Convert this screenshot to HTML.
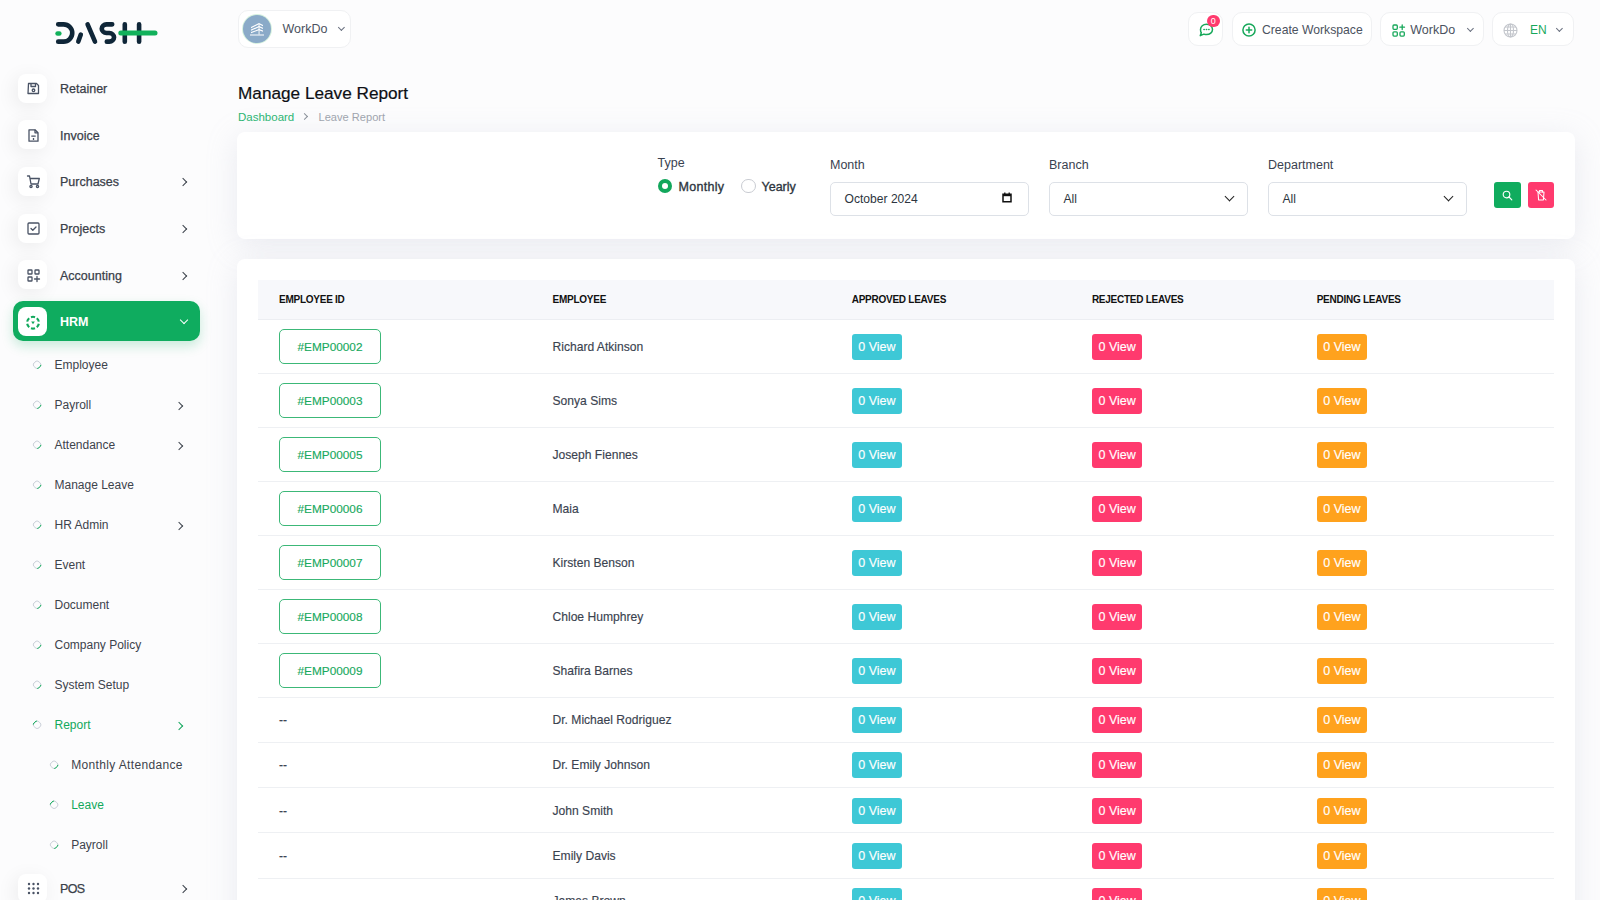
<!DOCTYPE html>
<html><head><meta charset="utf-8">
<style>
*{box-sizing:border-box;margin:0;padding:0}
html,body{width:1600px;height:900px;overflow:hidden}
body{font-family:"Liberation Sans",sans-serif;background:#fcfcfd;position:relative;color:#293240}
.abs{position:absolute}
#topbg{left:0;top:0;width:1600px;height:120px;background:linear-gradient(#fdfdfd,#fbfbfc)}
#sidebar{left:0;top:0;width:237px;height:900px}
.ib{position:absolute;left:18px;width:29px;height:29px;border-radius:8px;background:#fff;box-shadow:-3px 4px 20px rgba(0,0,0,.07)}
.ib svg{position:absolute;left:7.8px;top:7.5px}
.mi{position:absolute;left:60px;font-size:12.5px;color:#3a4049;line-height:16px;-webkit-text-stroke:.25px #3a4049}
.chev{position:absolute;left:180.3px;width:6px;height:6px;border-right:1.7px solid #3a4049;border-top:1.7px solid #3a4049;transform:rotate(45deg)}
.si{position:absolute;left:54px;font-size:12px;color:#3d434c;line-height:16px}
.bul{position:absolute;width:7.5px;height:7.5px;border-radius:50%;border:1.7px solid #cdd2da;border-bottom-color:#11a65a;transform:rotate(-45deg)}
.bul.act{border-color:#cdd2da;border-top-color:#11a65a}
.schev{position:absolute;left:176px;width:6px;height:6px;border-right:1.5px solid #2d3540;border-top:1.5px solid #2d3540;transform:rotate(45deg)}
.card{position:absolute;left:237px;width:1338px;background:#fff;border-radius:8px;box-shadow:0 6px 30px rgba(182,186,203,.26)}
.hbtn{position:absolute;top:12px;height:34px;background:#fff;border-radius:10px;border:1px solid #f0f1f3}
.lbl{position:absolute;font-size:12.5px;color:#3a4250;line-height:15px}
.inp{position:absolute;top:181.8px;height:33.8px;border:1px solid #dde1e7;border-radius:5px;background:#fff}
.inp span{position:absolute;left:13.5px;top:9px;font-size:12.1px;color:#2d3540;line-height:15px}
.dchev{position:absolute;width:7px;height:7px;border-right:1.6px solid #222;border-bottom:1.6px solid #222;transform:rotate(45deg)}
table{border-collapse:collapse;position:absolute;left:258px;top:280px;width:1296px;table-layout:fixed}
th{height:39px;background:#f7f8fb;text-align:left;font-size:10px;letter-spacing:-.25px;font-weight:bold;color:#111;padding:0;border-bottom:1px solid #eceef2}
td{padding:1px 0 0 0;font-size:12.1px;color:#3b4350;-webkit-text-stroke:.15px #3b4350;border-bottom:1px solid #eef0f3}
tr.r1 td{height:54px}
tr.r2 td{height:45.25px}
.emp{display:inline-block;width:102px;height:35px;border:1.5px solid #3cb878;border-radius:5px;color:#19a95e;font-size:11.8px;-webkit-text-stroke:.15px #19a95e;text-align:center;line-height:34px}
.vb{display:inline-block;width:50.5px;height:26px;border-radius:3px;color:#fff;-webkit-text-stroke:.15px #fff;font-size:12.5px;text-align:center;line-height:26px}
.c{background:#3ec8d6}.p{background:#ff3a6e}.o{background:#ffa21d}
</style></head><body>
<div id="sidebar" class="abs">
  <!-- logo -->
  <svg class="abs" style="left:50px;top:15px" width="115" height="35" viewBox="0 0 115 35">
    <g fill="none" stroke="#0f2638" stroke-width="4.6" stroke-linecap="round">
      <path d="M8.2 9.35H13.6A8.65 8.65 0 0 1 13.6 26.65H8.2"/>
      <path d="M30.8 19.6L28.3 26.6"/>
      <path d="M37.6 9.3L45 26.6"/>
      <path d="M62.2 9.35H56.5A5 4.33 0 0 0 56.5 18H59.3A5 4.33 0 0 1 59.3 26.65H56.8"/>
      <path d="M74.8 9.35V26.65M89.1 9.35V26.65"/>
    </g>
    <g fill="none" stroke="#12b15b" stroke-linecap="round">
      <path d="M7.6 18.5H9.3" stroke-width="4.6"/>
      <path d="M70.8 18H105" stroke-width="5"/>
    </g>
  </svg>

  <!-- main items -->
  <div class="ib" style="top:73.5px"><svg width="15" height="15" viewBox="0 0 15 15" fill="none" stroke="#4a5365" stroke-width="1.3" stroke-linejoin="round"><path d="M2.5 2.5h8l2 2v8h-10.5z"/><path d="M5 2.5v3h4.5v-3"/><circle cx="7.5" cy="9.3" r="1.3"/></svg></div>
  <div class="mi" style="top:81.0px">Retainer</div>
  <div class="ib" style="top:120px"><svg width="15" height="15" viewBox="0 0 15 15" fill="none" stroke="#4a5365" stroke-width="1.3" stroke-linejoin="round"><path d="M3 1.8h6l3 3v8.4h-9z"/><path d="M9 1.8v3h3"/><path d="M5.3 8.2h4.4M7.5 10v2"/></svg></div>
  <div class="mi" style="top:127.5px">Invoice</div>
  <div class="ib" style="top:166.5px"><svg width="15" height="15" viewBox="0 0 15 15" fill="none" stroke="#4a5365" stroke-width="1.3" stroke-linejoin="round" stroke-linecap="round"><path d="M1.5 2h2l1.5 8h7l1.3-5.5H4"/><circle cx="5" cy="12.5" r="1.1"/><circle cx="11.5" cy="12.5" r="1.1"/></svg></div>
  <div class="mi" style="top:174.0px">Purchases</div>
  <div class="chev" style="top:179.2px"></div>
  <div class="ib" style="top:213.5px"><svg width="15" height="15" viewBox="0 0 15 15" fill="none" stroke="#4a5365" stroke-width="1.3" stroke-linejoin="round" stroke-linecap="round"><rect x="2" y="2" width="11" height="11" rx="1"/><path d="M5 7.5l1.8 1.8 3.2-3.3"/></svg></div>
  <div class="mi" style="top:221.0px">Projects</div>
  <div class="chev" style="top:226.2px"></div>
  <div class="ib" style="top:260px"><svg width="15" height="15" viewBox="0 0 15 15" fill="none" stroke="#4a5365" stroke-width="1.3" stroke-linejoin="round" stroke-linecap="round"><rect x="2" y="2" width="4" height="4" rx=".6"/><rect x="9" y="2" width="4" height="4" rx=".6"/><rect x="2" y="9" width="4" height="4" rx=".6"/><path d="M11 8.5v5M8.5 11h5"/></svg></div>
  <div class="mi" style="top:267.5px">Accounting</div>
  <div class="chev" style="top:272.7px"></div>
  <!-- HRM -->
  <div class="abs" style="left:12.5px;top:301px;width:187.5px;height:40px;border-radius:10px;background:#0fac5f;box-shadow:0 5px 12px rgba(15,172,95,.22)"></div>
  <div class="ib" style="top:306.5px;box-shadow:none"><svg width="17" height="17" viewBox="0 0 17 17" style="left:6px;top:6px"><path d="M14.81 10.72A5.9 5.9 0 0 1 12.79 14.22M11.02 15.24A5.9 5.9 0 0 1 6.98 15.24M5.21 14.22A5.9 5.9 0 0 1 3.19 10.72M3.19 8.68A5.9 5.9 0 0 1 5.21 5.18M6.98 4.16A5.9 5.9 0 0 1 11.02 4.16M12.79 5.18A5.9 5.9 0 0 1 14.81 8.68" fill="none" stroke="#10a85c" stroke-width="2.1"/><path d="M7.2 8.4h3.6l-1.8 2.9z" fill="#10a85c"/></svg></div>
  <div class="mi" style="top:314px;color:#fff;font-weight:bold;-webkit-text-stroke:0">HRM</div>
  <div class="abs" style="left:180.5px;top:316.5px;width:6px;height:6px;border-right:1.6px solid #fff;border-bottom:1.6px solid #fff;transform:rotate(45deg)"></div>
  <div class="bul" style="left:32.8px;top:360.5px"></div>
  <div class="si" style="left:54.5px;top:357.3px;color:#3d434c">Employee</div>
  <div class="bul" style="left:32.8px;top:400.5px"></div>
  <div class="si" style="left:54.5px;top:397.3px;color:#3d434c">Payroll</div>
  <div class="schev" style="top:402.5px;border-color:#3d434c"></div>
  <div class="bul" style="left:32.8px;top:440.5px"></div>
  <div class="si" style="left:54.5px;top:437.3px;color:#3d434c">Attendance</div>
  <div class="schev" style="top:442.5px;border-color:#3d434c"></div>
  <div class="bul" style="left:32.8px;top:480.5px"></div>
  <div class="si" style="left:54.5px;top:477.3px;color:#3d434c">Manage Leave</div>
  <div class="bul" style="left:32.8px;top:520.5px"></div>
  <div class="si" style="left:54.5px;top:517.3px;color:#3d434c">HR Admin</div>
  <div class="schev" style="top:522.5px;border-color:#3d434c"></div>
  <div class="bul" style="left:32.8px;top:560.5px"></div>
  <div class="si" style="left:54.5px;top:557.3px;color:#3d434c">Event</div>
  <div class="bul" style="left:32.8px;top:600.5px"></div>
  <div class="si" style="left:54.5px;top:597.3px;color:#3d434c">Document</div>
  <div class="bul" style="left:32.8px;top:640.5px"></div>
  <div class="si" style="left:54.5px;top:637.3px;color:#3d434c">Company Policy</div>
  <div class="bul" style="left:32.8px;top:680.5px"></div>
  <div class="si" style="left:54.5px;top:677.3px;color:#3d434c">System Setup</div>
  <div class="bul act" style="left:32.8px;top:720.5px"></div>
  <div class="si" style="left:54.5px;top:717.3px;color:#13a85c">Report</div>
  <div class="schev" style="top:722.5px;border-color:#13a85c"></div>
  <div class="bul" style="left:49.5px;top:760.5px"></div>
  <div class="si" style="left:71.2px;top:757.3px;color:#3d434c;letter-spacing:.35px">Monthly Attendance</div>
  <div class="bul act" style="left:49.5px;top:800.5px"></div>
  <div class="si" style="left:71.2px;top:797.3px;color:#13a85c">Leave</div>
  <div class="bul" style="left:49.5px;top:840.5px"></div>
  <div class="si" style="left:71.2px;top:837.3px;color:#3d434c">Payroll</div>
  <div class="ib" style="top:873.5px"><svg width="15" height="15" viewBox="0 0 15 15" fill="#4a5365"><circle cx="3" cy="3" r="1.2"/><circle cx="7.5" cy="3" r="1.2"/><circle cx="12" cy="3" r="1.2"/><circle cx="3" cy="7.5" r="1.2"/><circle cx="7.5" cy="7.5" r="1.2"/><circle cx="12" cy="7.5" r="1.2"/><circle cx="3" cy="12" r="1.2"/><circle cx="7.5" cy="12" r="1.2"/><circle cx="12" cy="12" r="1.2"/></svg></div>
  <div class="mi" style="top:881px;letter-spacing:-.6px">POS</div>
  <div class="chev" style="top:886.2px"></div>
</div>

<!-- header -->
<div class="hbtn" style="left:238px;top:10px;width:113px;height:38px">
  <div class="abs" style="left:4px;top:4px;width:28px;height:28px;border-radius:50%;background:#8aaac8;box-shadow:0 0 0 1px #d7f2df">
    <svg class="abs" style="left:6px;top:6px" width="16" height="16" viewBox="0 0 16 16" fill="#fff"><path d="M2 6l8-4 4 2v1.2l-4-2-8 4z"/><path d="M2 8.5l8-3.5 4 1.8v1.2l-4-1.8-8 3.5z"/><path d="M2 11l8-3 4 1.5v1.2l-4-1.5-8 3z"/><path d="M1 13.5h14v1h-14z"/><path d="M9.6 3v10.5h.9V3z"/></svg>
  </div>
  <div class="abs" style="left:43.5px;top:11px;font-size:12.5px;color:#4b5260;line-height:15px">WorkDo</div>
  <div class="abs" style="left:99.5px;top:13.5px;width:4.8px;height:4.8px;border-right:1.3px solid #6b7280;border-bottom:1.3px solid #6b7280;transform:rotate(45deg)"></div>
</div>
<div class="hbtn" style="left:1188px;width:35px">
  <svg class="abs" style="left:9.5px;top:9.7px" width="15" height="14" viewBox="0 0 15 14" fill="none" stroke="#17a85a" stroke-width="1.5" stroke-linejoin="round"><path d="M7.5 1.2c3.4 0 6 2.3 6 5.2s-2.6 5.2-6 5.2c-.9 0-1.8-.2-2.6-.5L1.3 12.6l1-2.9C1.6 8.8 1.5 7.6 1.5 6.4c0-2.9 2.6-5.2 6-5.2z"/><path d="M5 6.5h.2M7.4 6.5h.2M9.8 6.5h.2" stroke-width="1.6" stroke-linecap="round"/></svg>
  <div class="abs" style="left:18px;top:1.5px;width:12.5px;height:12.5px;border-radius:50%;background:#ff3a6e;color:#fff;font-size:9px;text-align:center;line-height:12.5px">0</div>
</div>
<div class="hbtn" style="left:1232px;width:140px">
  <svg class="abs" style="left:8.7px;top:10px" width="14" height="14" viewBox="0 0 14 14" fill="none" stroke="#17a85a" stroke-width="1.5" stroke-linecap="round"><circle cx="7" cy="7" r="6.1"/><path d="M7 4.3v5.4M4.3 7h5.4"/></svg>
  <div class="abs" style="left:29px;top:10px;font-size:12.2px;color:#4b5260;line-height:15px">Create Workspace</div>
</div>
<div class="hbtn" style="left:1380px;width:104px">
  <svg class="abs" style="left:10.5px;top:11px" width="14" height="13" viewBox="0 0 14 13" fill="none" stroke="#17a85a" stroke-width="1.3" stroke-linecap="round"><rect x="1" y="1" width="4.3" height="4.3" rx="1"/><rect x="1" y="7.8" width="4.3" height="4.3" rx="1"/><rect x="8" y="7.8" width="4.3" height="4.3" rx="1"/><path d="M10.2 0.9v4.6M7.9 3.2h4.6"/></svg>
  <div class="abs" style="left:29.3px;top:10px;font-size:12.5px;color:#4b5260;line-height:15px">WorkDo</div>
  <div class="abs" style="left:86.5px;top:12.5px;width:4.8px;height:4.8px;border-right:1.3px solid #6b7280;border-bottom:1.3px solid #6b7280;transform:rotate(45deg)"></div>
</div>
<div class="hbtn" style="left:1492px;width:82px">
  <svg class="abs" style="left:10px;top:10px" width="15" height="15" viewBox="0 0 15 15" fill="none" stroke="#c3c6cc" stroke-width="1.1"><circle cx="7.5" cy="7.5" r="6.5"/><ellipse cx="7.5" cy="7.5" rx="3" ry="6.5"/><path d="M1 7.5h13M2 4h11M2 11h11M7.5 1v13"/></svg>
  <div class="abs" style="left:37px;top:10.3px;font-size:12px;color:#17a85a;line-height:15px">EN</div>
  <div class="abs" style="left:64px;top:12.5px;width:4.8px;height:4.8px;border-right:1.3px solid #6b7280;border-bottom:1.3px solid #6b7280;transform:rotate(45deg)"></div>
</div>
<!-- title -->
<div class="abs" style="left:238px;top:82.5px;font-size:17.2px;color:#0d0f14;-webkit-text-stroke:.2px #0d0f14;line-height:20px">Manage Leave Report</div>
<div class="abs" style="left:238px;top:110px;font-size:11.5px;color:#2bb673;line-height:14px">Dashboard</div>
<div class="abs" style="left:302px;top:114px;width:5px;height:5px;border-right:1.2px solid #8a9099;border-top:1.2px solid #8a9099;transform:rotate(45deg)"></div>
<div class="abs" style="left:318.5px;top:110.3px;font-size:11.1px;color:#a0a5ae;line-height:14px">Leave Report</div>
<!-- filter card -->
<div class="card" style="top:132px;height:107px"></div>
<div class="lbl" style="left:657.5px;top:155.5px">Type</div>
<div class="abs" style="left:657.5px;top:178.5px;width:14.5px;height:14.5px;border-radius:50%;background:#12a75c"><div class="abs" style="left:4.25px;top:4.25px;width:6px;height:6px;border-radius:50%;background:#fff"></div></div>
<div class="abs" style="left:678.5px;top:179.5px;font-size:12.5px;color:#2d3540;line-height:15px;letter-spacing:.3px;-webkit-text-stroke:.35px #2d3540">Monthly</div>
<div class="abs" style="left:741px;top:178.5px;width:14.5px;height:14.5px;border-radius:50%;border:1px solid #c9ccd2;background:#fff"></div>
<div class="abs" style="left:761.5px;top:179.5px;font-size:12.5px;color:#2d3540;line-height:15px;-webkit-text-stroke:.35px #2d3540">Yearly</div>
<div class="lbl" style="left:830px;top:158px">Month</div>
<div class="inp" style="left:830px;width:199px"><span>October 2024</span>
  <svg class="abs" style="left:171px;top:9.3px" width="10" height="11" viewBox="0 0 10 11"><path d="M1 2.2h8v7.6h-8z" fill="none" stroke="#111" stroke-width="1.5"/><path d="M1 2h8v2.2h-8z" fill="#111"/><path d="M2.8 0.5v2M7.2 0.5v2" stroke="#111" stroke-width="1.3"/></svg>
</div>
<div class="lbl" style="left:1049px;top:158px">Branch</div>
<div class="inp" style="left:1049px;width:199px"><span>All</span><div class="dchev" style="left:176px;top:10px"></div></div>
<div class="lbl" style="left:1268px;top:158px">Department</div>
<div class="inp" style="left:1268px;width:199px"><span>All</span><div class="dchev" style="left:176px;top:10px"></div></div>
<div class="abs" style="left:1494px;top:182px;width:26.5px;height:26px;border-radius:3px;background:#10ac5e">
  <svg class="abs" style="left:8px;top:7.5px" width="11" height="11" viewBox="0 0 11 11" fill="none" stroke="#fff" stroke-width="1.15" stroke-linecap="round"><circle cx="4.5" cy="4.5" r="3.3"/><path d="M7 7l2.8 2.8"/></svg>
</div>
<div class="abs" style="left:1527.5px;top:182px;width:26.5px;height:26px;border-radius:3px;background:#ff3a6e">
  <svg class="abs" style="left:7.5px;top:7px" width="12" height="12" viewBox="0 0 12 12" fill="none" stroke="#fff" stroke-width="1.05" stroke-linecap="round" stroke-linejoin="round"><path d="M3 3h6l-.6 8h-4.8z"/><path d="M4.5 3v-1.6h3V3"/><path d="M1 1l10 10"/></svg>
</div>
<!-- table card -->
<div class="card" style="top:259px;height:700px"></div>
<table>
<colgroup><col style="width:294.5px"><col style="width:299.2px"><col style="width:240.2px"><col style="width:224.8px"><col></colgroup>
<tr><th style="padding-left:21px">EMPLOYEE ID</th><th>EMPLOYEE</th><th>APPROVED LEAVES</th><th>REJECTED LEAVES</th><th>PENDING LEAVES</th></tr>
<tr class="r1"><td style="padding-left:21px"><span class="emp">#EMP00002</span></td><td>Richard Atkinson</td><td><span class="vb c">0 View</span></td><td><span class="vb p">0 View</span></td><td><span class="vb o">0 View</span></td></tr>
<tr class="r1"><td style="padding-left:21px"><span class="emp">#EMP00003</span></td><td>Sonya Sims</td><td><span class="vb c">0 View</span></td><td><span class="vb p">0 View</span></td><td><span class="vb o">0 View</span></td></tr>
<tr class="r1"><td style="padding-left:21px"><span class="emp">#EMP00005</span></td><td>Joseph Fiennes</td><td><span class="vb c">0 View</span></td><td><span class="vb p">0 View</span></td><td><span class="vb o">0 View</span></td></tr>
<tr class="r1"><td style="padding-left:21px"><span class="emp">#EMP00006</span></td><td>Maia</td><td><span class="vb c">0 View</span></td><td><span class="vb p">0 View</span></td><td><span class="vb o">0 View</span></td></tr>
<tr class="r1"><td style="padding-left:21px"><span class="emp">#EMP00007</span></td><td>Kirsten Benson</td><td><span class="vb c">0 View</span></td><td><span class="vb p">0 View</span></td><td><span class="vb o">0 View</span></td></tr>
<tr class="r1"><td style="padding-left:21px"><span class="emp">#EMP00008</span></td><td>Chloe Humphrey</td><td><span class="vb c">0 View</span></td><td><span class="vb p">0 View</span></td><td><span class="vb o">0 View</span></td></tr>
<tr class="r1"><td style="padding-left:21px"><span class="emp">#EMP00009</span></td><td>Shafira Barnes</td><td><span class="vb c">0 View</span></td><td><span class="vb p">0 View</span></td><td><span class="vb o">0 View</span></td></tr>
<tr class="r2"><td style="padding-left:21px">--</td><td>Dr. Michael Rodriguez</td><td><span class="vb c">0 View</span></td><td><span class="vb p">0 View</span></td><td><span class="vb o">0 View</span></td></tr>
<tr class="r2"><td style="padding-left:21px">--</td><td>Dr. Emily Johnson</td><td><span class="vb c">0 View</span></td><td><span class="vb p">0 View</span></td><td><span class="vb o">0 View</span></td></tr>
<tr class="r2"><td style="padding-left:21px">--</td><td>John Smith</td><td><span class="vb c">0 View</span></td><td><span class="vb p">0 View</span></td><td><span class="vb o">0 View</span></td></tr>
<tr class="r2"><td style="padding-left:21px">--</td><td>Emily Davis</td><td><span class="vb c">0 View</span></td><td><span class="vb p">0 View</span></td><td><span class="vb o">0 View</span></td></tr>
<tr class="r2"><td style="padding-left:21px">--</td><td>James Brown</td><td><span class="vb c">0 View</span></td><td><span class="vb p">0 View</span></td><td><span class="vb o">0 View</span></td></tr>
</table>
</body></html>
